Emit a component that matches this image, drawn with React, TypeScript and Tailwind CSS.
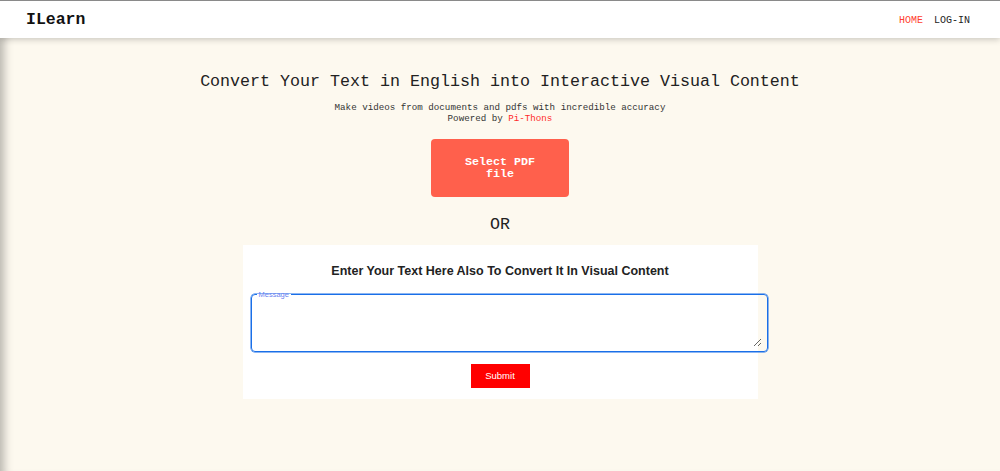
import React from 'react'

const mono = { fontFamily: '"Liberation Mono", "Courier New", monospace' }
const sans = { fontFamily: '"Liberation Sans", Arial, sans-serif' }

function NavBar() {
  return (
    <header
      className="relative z-10 flex h-[38px] items-center justify-between border-t border-[#8a8a8a] bg-white pl-[26px] pr-[30px] shadow-[0_2px_6px_rgba(0,0,0,0.18)]"
      style={mono}
    >
      <span className="pt-[2px] text-[16.5px] font-bold text-[#111]">ILearn</span>
      <nav className="flex items-center gap-[11px] pt-[1px] text-[10px]">
        <a className="text-[#ff4030]">HOME</a>
        <a className="text-[#222]">LOG-IN</a>
      </nav>
    </header>
  )
}

function MessageCard() {
  return (
    <div className="mt-[10px] w-[515px] bg-white px-2 pb-[11px] pt-[17px]">
      <h2 className="text-center text-[12.5px] font-bold text-[#222]" style={sans}>
        Enter Your Text Here Also To Convert It In Visual Content
      </h2>
      <fieldset className="mt-[10px] h-[61px] w-[517px] rounded-[4px] border border-[#1a6fe8] px-[5px] pb-0 pt-0 shadow-[0_0_0_0.5px_#1a6fe8]">
        <legend className="px-[2px] text-[7.5px] leading-[8px] text-[#6b83f0]" style={sans}>
          Message
        </legend>
        <textarea className="h-[48px] w-full resize-y outline-none" />
      </fieldset>
      <div className="mt-[12px] flex justify-center">
        <button className="h-[24px] w-[59px] bg-[#ff0000] text-[9.5px] text-white" style={sans}>
          Submit
        </button>
      </div>
    </div>
  )
}

export default function App() {
  return (
    <div className="h-[471px] w-[1000px] overflow-hidden bg-[#fdf9ef]">
      <NavBar />
      <main
        className="flex h-[433px] flex-col items-center shadow-[inset_12px_0_10px_-8px_rgba(0,0,0,0.28)]"
        style={mono}
      >
        <h1 className="mt-[34px] text-[16.67px] leading-[20px] text-[#222]">
          Convert Your Text in English into Interactive Visual Content
        </h1>
        <p className="mt-[10px] text-center text-[9.2px] leading-[11px] text-[#333]">
          Make videos from documents and pdfs with incredible accuracy
          <br />
          Powered by <span className="text-[#ff2a2a]">Pi-Thons</span>
        </p>
        <button className="mt-[15px] flex h-[58px] w-[138px] items-center justify-center rounded-[4px] bg-[#ff604c] text-[11.67px] font-bold leading-[12px] text-white">
          Select PDF
          <br />
          file
        </button>
        <div className="mt-[18px] text-[16.67px] leading-[20px] text-[#222]">OR</div>
        <MessageCard />
      </main>
    </div>
  )
}
